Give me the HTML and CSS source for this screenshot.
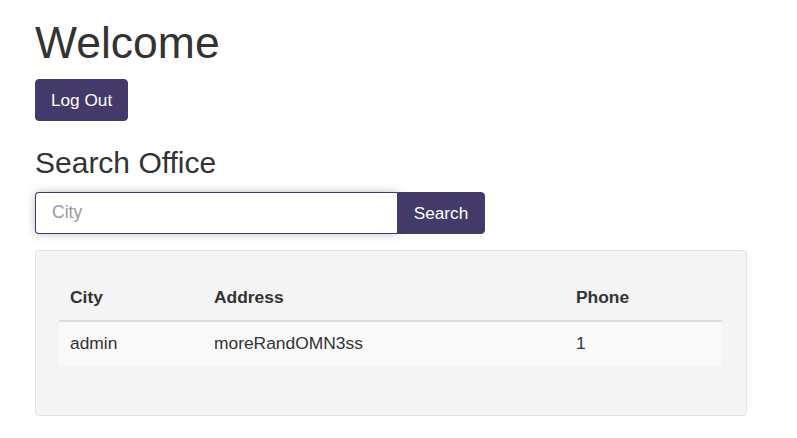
FILE: index.html
```html
<!DOCTYPE html>
<html>
<head>
<meta charset="utf-8">
<link rel="stylesheet" href="styles.css">
</head>
<body>
<div class="container">
  <h1 class="title">Welcome</h1>
  <button class="btn">Log Out</button>
  <h2 class="subtitle">Search Office</h2>
  <div class="input-group">
    <input class="search-input" type="text" placeholder="City">
    <button class="btn btn-attached">Search</button>
  </div>
  <div class="well">
    <table class="table">
      <thead>
        <tr><th class="col-city">City</th><th class="col-address">Address</th><th>Phone</th></tr>
      </thead>
      <tbody>
        <tr><td>admin</td><td>moreRandOMN3ss</td><td>1</td></tr>
      </tbody>
    </table>
  </div>
</div>
</body>
</html>
```
FILE: styles.css
```css
* { box-sizing: border-box; }
html, body { margin: 0; padding: 0; background: #fff; }
body {
  font-family: "Liberation Sans", Arial, sans-serif;
  font-size: 17.4px;
  color: #333;
}
.container {
  padding: 18.5px 50px 0 35px;
}
.title {
  font-size: 44.5px;
  font-weight: 400;
  line-height: 48.4px;
  margin: 0 0 12px;
}
.btn {
  display: inline-block;
  background: #433a6a;
  color: #fff;
  border: 1px solid #433a6a;
  border-radius: 4px;
  font-family: inherit;
  font-size: 17.2px;
  line-height: 24px;
  padding: 8px 15px;
  height: 42px;
  cursor: pointer;
}
.subtitle {
  font-size: 30px;
  font-weight: 400;
  line-height: 33px;
  margin: 25.5px 0 12.5px;
}
.input-group {
  display: flex;
  width: 450px;
  height: 42px;
}
.search-input {
  width: 362px;
  height: 42px;
  border: 1px solid #433a6a;
  border-right: none;
  border-radius: 4px 0 0 4px;
  font-family: inherit;
  font-size: 17.5px;
  padding: 0 16px;
  color: #555;
  outline: none;
  box-shadow: 0 0 8px rgba(67, 58, 106, 0.35);
}
.search-input::placeholder { color: #999; }
.btn-attached {
  width: 88px;
  padding: 8px 0;
  border-radius: 0 4px 4px 0;
}
.well {
  margin-top: 16px;
  background: #f4f4f4;
  border: 1px solid #e3e3e3;
  border-radius: 4px;
  padding: 23px 24px 23px 23px;
}
.table {
  width: 100%;
  border-collapse: collapse;
  margin-bottom: 26px;
}
.table th, .table td {
  text-align: left;
  padding: 11px 11px 13px;
  line-height: 20px;
}
.table th {
  font-weight: 700;
  border-bottom: 2px solid #ddd;
  height: 47px;
  padding-top: 13px;
}
.table td { height: 44px; }
.table tbody tr { background: #f9f9f9; }
.col-city { width: 144px; }
.col-address { width: 362px; }
```
